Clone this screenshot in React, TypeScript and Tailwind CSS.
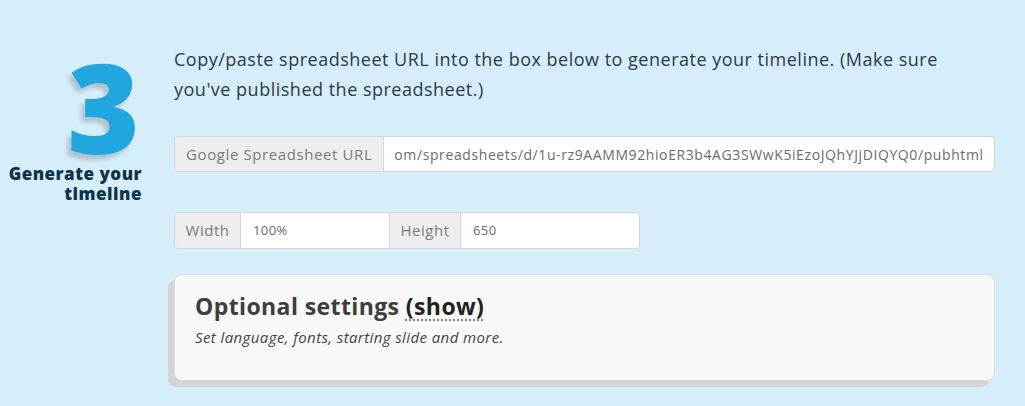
export default function App() {
  return (
    <div className="min-h-[406px] w-full bg-[#d5eefa] font-['Open_Sans',sans-serif]">
      <div className="flex gap-[32px] pt-[44px] pr-[30px]">
        <div className="w-[142px] shrink-0 text-right">
          <div className="mt-[12px] pr-[2px] text-[124px] font-extrabold leading-[100px] text-[#22a6df] [text-shadow:-4px_5px_4px_rgba(0,0,0,0.18)]">
            3
          </div>
          <h2 className="mt-[8px] text-[17px] font-extrabold leading-[20px] tracking-[0.5px] text-[#0f3449]">
            Generate your
            <br />
            timeline
          </h2>
        </div>

        <div className="flex-1">
          <p className="w-[800px] text-[18px] leading-[30px] tracking-[0.5px] text-[#2e3b45]">
            Copy/paste spreadsheet URL into the box below to generate your timeline. (Make sure you've published the
            spreadsheet.)
          </p>

          <div className="mt-[32px] flex h-[36px] w-[821px] rounded-[4px] border border-[#d6d6d6] shadow-[inset_0_1px_2px_rgba(0,0,0,0.06)]">
            <span className="flex items-center rounded-l-[4px] border-r border-[#d6d6d6] bg-[#eeeeee] px-[11px] text-[15px] tracking-[0.6px] text-[#7a7a7a]">
              Google Spreadsheet URL
            </span>
            <div className="flex flex-1 items-center overflow-hidden whitespace-nowrap rounded-r-[4px] bg-white px-[10px] text-[14px] tracking-[0.6px] text-[#6b6b6b]">
              om/spreadsheets/d/1u-rz9AAMM92hioER3b4AG3SWwK5iEzoJQhYJjDIQYQ0/pubhtml
            </div>
          </div>

          <div className="mt-[40px] flex h-[37px] w-[466px] rounded-[4px] border border-[#d6d6d6]">
            <span className="flex w-[66px] items-center justify-center rounded-l-[4px] border-r border-[#d6d6d6] bg-[#eeeeee] text-[15px] tracking-[0.5px] text-[#7a7a7a]">
              Width
            </span>
            <div className="flex w-[148px] items-center bg-white px-[12px] text-[13px] tracking-[0.4px] text-[#6b6b6b]">100%</div>
            <span className="flex w-[72px] items-center justify-center border-x border-[#d6d6d6] bg-[#eeeeee] text-[15px] tracking-[0.5px] text-[#7a7a7a]">
              Height
            </span>
            <div className="flex flex-1 items-center rounded-r-[4px] bg-white px-[12px] text-[13px] tracking-[0.4px] text-[#6b6b6b]">650</div>
          </div>

          <div className="mt-[25px] h-[107px] w-[821px] rounded-[8px] border border-[#dcdcdc] bg-[#f8f8f8] px-[20px] pt-[15px] shadow-[-6px_6px_0_#d4d4d4]">
            <h3 className="text-[23px] font-bold leading-[32px] tracking-[0.4px] text-[#3d3d3d]">
              Optional settings{' '}
              <span className="text-[#222] underline decoration-dotted decoration-[#888] underline-offset-[4px]">(show)</span>
            </h3>
            <p className="mt-[5px] text-[15px] italic leading-[20px] tracking-[0.4px] text-[#444]">
              Set language, fonts, starting slide and more.
            </p>
          </div>
        </div>
      </div>
    </div>
  );
}
